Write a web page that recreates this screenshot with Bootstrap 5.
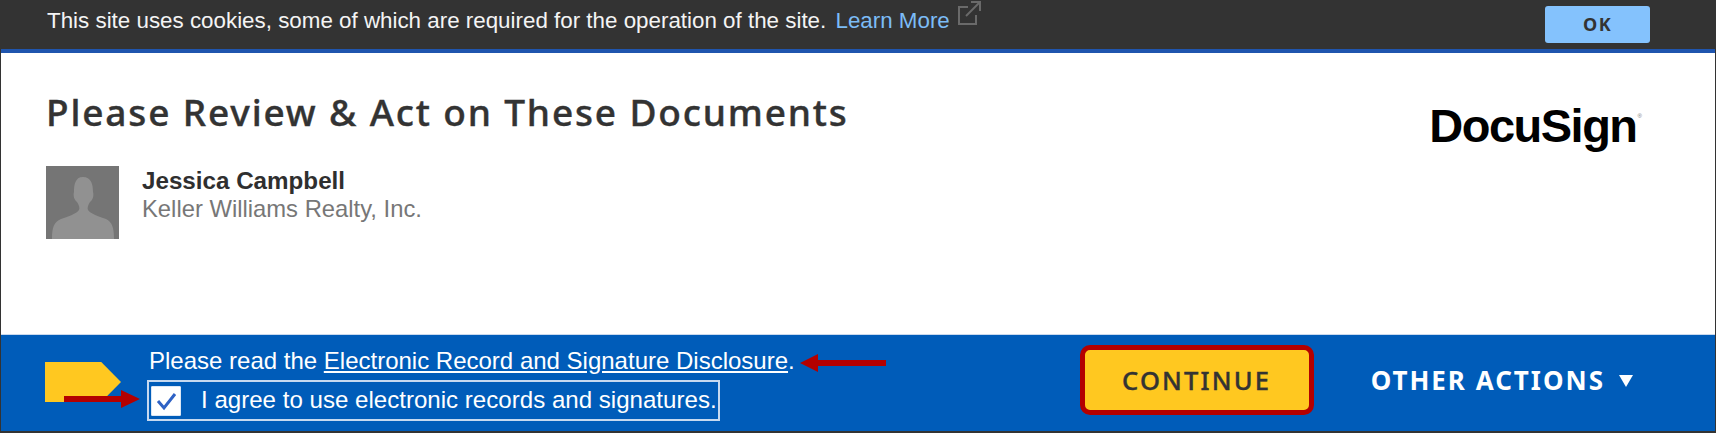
<!DOCTYPE html>
<html lang="en">

<head>
  <meta charset="UTF-8" />
  <meta name="viewport" content="width=device-width, initial-scale=1" />
  <title>Please Review &amp; Act on These Documents</title>
  <link href="https://cdn.jsdelivr.net/npm/bootstrap@5.3.3/dist/css/bootstrap.min.css" rel="stylesheet">
  <style>
    body {
      background-color: #fff;
      font-family: "Liberation Sans", Arial, sans-serif;
    }

    .signing-frame {
      height: 433px;
      border-left: 1px solid #333;
      border-right: 1px solid #333;
      position: relative;
    }

    .cookie-bar {
      height: 53px;
      flex: none;
      background-color: #333;
      border-bottom: 4px solid #1f55ae;
      padding: 0 65px 0 46px;
      color: #f4f4f4;
      font-size: 22.36px;
    }

    .cookie-text {
      padding-top: 1px;
      align-self: flex-start;
    }

    .cookie-text a {
      color: #7cbcf6;
      text-decoration: none;
      margin-left: 3px;
    }

    .cookie-text svg {
      margin-left: 1px;
      vertical-align: 2.5px;
    }

    .btn-ok {
      width: 105px;
      height: 37px;
      padding: 0;
      background-color: #84c2fd;
      border: 0;
      border-radius: 3px;
      color: #333;
      font-family: "Noto Sans", sans-serif;
      font-size: 18px;
      font-weight: 700;
      letter-spacing: 1.5px;
    }

    .doc-area {
      flex: 1 1 auto;
      padding: 37px 73px 0 45px;
    }

    .doc-title {
      margin: 0 0 32px;
      color: #333;
      font-family: "Noto Sans", sans-serif;
      font-size: 37px;
      font-weight: 500;
      line-height: 44px;
      letter-spacing: 1.85px;
      -webkit-text-stroke: .4px #333;
    }

    .avatar-box {
      width: 73px;
      height: 73px;
      margin-right: 23px;
      flex: none;
      background-color: #757575;
    }

    .sender-name {
      color: #2f2f2f;
      font-size: 24.2px;
      font-weight: 700;
      line-height: 29px;
    }

    .sender-org {
      color: #777;
      font-size: 23.8px;
      line-height: 28px;
    }

    .docusign-logo {
      color: #000;
      font-size: 47px;
      font-weight: 700;
      letter-spacing: -1.5px;
      line-height: 54px;
      margin-top: 9px;
    }

    .docusign-logo sup {
      font-size: 6px;
      font-weight: 400;
      letter-spacing: 0;
      top: -24px;
      margin-left: 1px;
      color: #777;
    }

    .action-bar {
      height: 99px;
      flex: none;
      background-color: #005cb9;
      border-top: 1px solid #c9d9ee;
      border-bottom: 2px solid #333;
      padding: 0 82px 0 44px;
      color: #fff;
      font-size: 24px;
    }

    .sign-tag {
      width: 76px;
      height: 40px;
      margin-right: 26px;
      margin-bottom: 2px;
      flex: none;
      background-color: #ffc820;
      clip-path: polygon(0 0, 74% 0, 100% 50%, 74% 100%, 0 100%);
    }

    .agree-block {
      padding-top: 2px;
    }

    .agree-block a {
      color: #fff;
    }

    .disclosure-line {
      line-height: 28px;
      margin-left: 2px;
      margin-bottom: 5px;
    }

    .agree-label {
      width: 573px;
      height: 41px;
      border: 2px solid #c6d9f0;
      padding-left: 2px;
      gap: 20px;
      font-size: 24.1px;
      white-space: nowrap;
    }

    .agree-label .form-check-input {
      width: 30px;
      height: 30px;
      margin: 0;
      flex: none;
      background-color: #fff;
      border: 1px solid #dce7f5;
      border-radius: 1px;
      background-size: 24px;
      background-image: url("data:image/svg+xml,%3csvg xmlns='http://www.w3.org/2000/svg' viewBox='0 0 24 24'%3e%3cpath fill='none' stroke='%232f62c5' stroke-width='3' d='M4 12l6 7L21 5'/%3e%3c/svg%3e");
    }

    .action-right {
      margin-bottom: 6px;
    }

    .btn-continue {
      width: 234px;
      height: 70px;
      padding: 0;
      background-color: #ffc820;
      border: 5px solid #b40000;
      border-radius: 10px;
      color: #333;
      font-family: "Noto Sans", sans-serif;
      font-size: 25.5px;
      font-weight: 500;
      letter-spacing: 2.2px;
      -webkit-text-stroke: .4px #333;
    }

    .btn-continue:hover {
      background-color: #ffc820;
      border-color: #b40000;
    }

    .btn-other {
      margin-left: 57px;
      padding: 0;
      border: 0;
      color: #fff;
      font-family: "Noto Sans", sans-serif;
      font-size: 26px;
      font-weight: 700;
      letter-spacing: 2px;
    }

    .btn-other::after {
      margin-left: 14px;
      vertical-align: 3px;
      border-top: 12px solid #fff;
      border-right: 7.5px solid transparent;
      border-left: 7.5px solid transparent;
      border-bottom: 0;
    }

    /* red annotation arrows, drawn on top of the screenshot */
    .note-arrow {
      position: absolute;
    }

    .note-arrow-agree {
      left: 63px;
      top: 390px;
    }

    .note-arrow-read {
      left: 799px;
      top: 354px;
    }
  </style>
</head>

<body>

  <div class="signing-frame d-flex flex-column">

    <div class="cookie-bar d-flex justify-content-between align-items-center">
      <div class="cookie-text">
        This site uses cookies, some of which are required for the operation of the site.
        <a href="#">Learn More</a>
        <svg width="24" height="24" viewBox="0 0 24 24" fill="none" stroke="#6a6a6a" stroke-width="2">
          <path d="M11 6H2v17h17v-9" />
          <path d="M9 15L22 2" />
          <path d="M14 1h9v9" />
        </svg>
      </div>
      <button type="button" class="btn btn-ok">OK</button>
    </div>

    <div class="doc-area d-flex justify-content-between">
      <div>
        <h1 class="doc-title">Please Review &amp; Act on These Documents</h1>
        <div class="d-flex">
          <div class="avatar-box">
            <svg width="73" height="73" viewBox="0 0 73 73">
              <path fill="#919191" d="M6 73c0-12 2-17 9-20 8-3 15-5 18-9 1-2 0-5-2-8-3-2-4-7-3-10 0-7 1-15 9-15s10 7 10 15c1 3 0 8-3 10-2 3-3 6-2 8 3 4 10 6 18 9 6 3 8 8 8 20z" />
            </svg>
          </div>
          <div>
            <div class="sender-name">Jessica Campbell</div>
            <div class="sender-org">Keller Williams Realty, Inc.</div>
          </div>
        </div>
      </div>
      <div class="docusign-logo">DocuSign<sup>®</sup></div>
    </div>

    <div class="action-bar d-flex align-items-center justify-content-between">
      <div class="d-flex align-items-center">
        <div class="sign-tag"></div>
        <div class="agree-block">
          <div class="disclosure-line">Please read the <a href="#">Electronic Record and Signature Disclosure</a>.</div>
          <label class="agree-label d-flex align-items-center" for="agreeCheck">
            <input class="form-check-input" type="checkbox" id="agreeCheck" checked>
            <span>I agree to use electronic records and signatures.</span>
          </label>
        </div>
      </div>
      <div class="action-right d-flex align-items-center">
        <button type="button" class="btn btn-continue">CONTINUE</button>
        <button type="button" class="btn btn-other dropdown-toggle">OTHER ACTIONS</button>
      </div>
    </div>

    <svg class="note-arrow note-arrow-agree" width="76" height="18" viewBox="0 0 76 18">
      <path fill="#b40000" d="M0 6h57V0l19 9-19 9v-6H0z" />
    </svg>
    <svg class="note-arrow note-arrow-read" width="86" height="18" viewBox="0 0 86 18">
      <path fill="#b40000" d="M0 9l18-9v6h68v6H18v6z" />
    </svg>
  </div>

  <script src="https://cdn.jsdelivr.net/npm/bootstrap@5.3.3/dist/js/bootstrap.bundle.min.js"></script>
</body>

</html>
